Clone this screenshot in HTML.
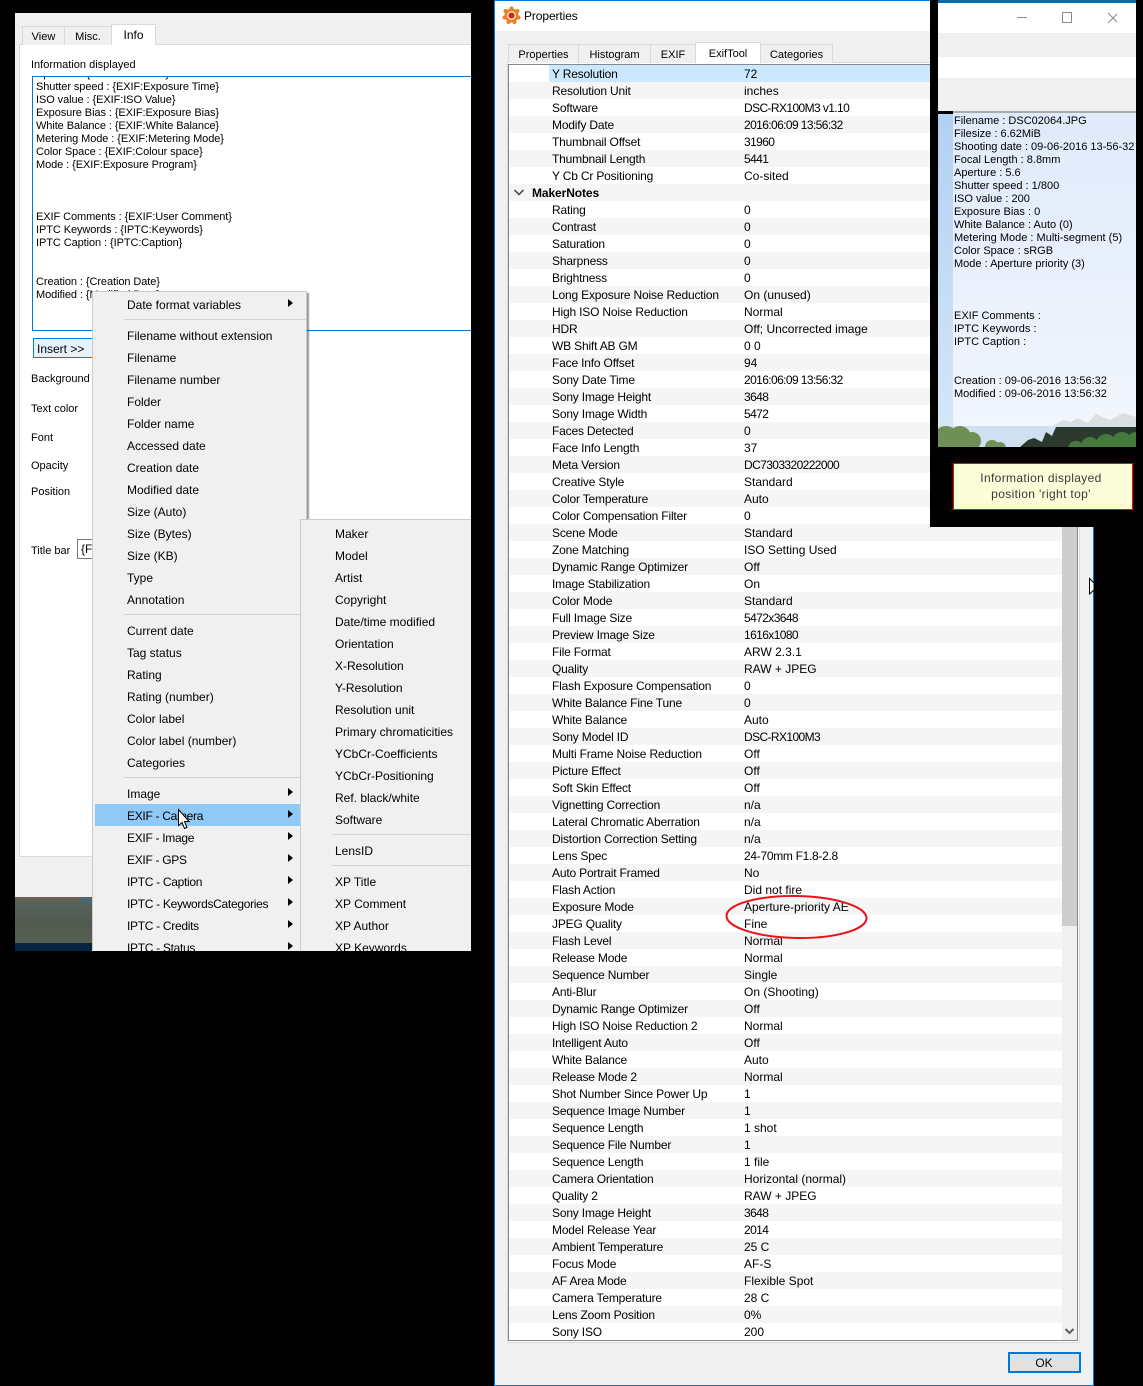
<!DOCTYPE html>
<html><head><meta charset="utf-8"><style>
html,body{margin:0;padding:0;background:#000}
#p{position:relative;width:1143px;height:1386px;overflow:hidden;background:#000;font:12px/16px "Liberation Sans",sans-serif;color:#000}
#p div,#p span{position:absolute;white-space:nowrap}
.w{background:#f0f0f0}
.tb{background:#f0f0f0;border:1px solid #d9d9d9;border-bottom:none;box-sizing:border-box;text-align:center;line-height:20px;font-size:11px}
.ta{background:#fff;border:1px solid #d9d9d9;border-bottom:none;box-sizing:border-box;text-align:center;line-height:23px;z-index:2;font-size:11px}
#m div,#s div{position:relative;height:22px;line-height:25px;padding-left:34px}
#m,#s{background:#f0f0f0;box-sizing:border-box}
#m{left:77px;top:278px;width:215px;height:670px;border:1px solid #ccc;padding-top:1px;box-shadow:2px 2px 1px rgba(0,0,0,.4)}
#s{left:285px;top:506px;width:190px;height:440px;border:1px solid #ccc;padding-top:2px}
#m hr,#s hr{border:0;border-top:1px solid #d4d4d4;margin:4px 0 4px 31px;height:0}
#m div span{left:195px;top:6px;width:0;height:0;border-left:5px solid #000;border-top:4px solid transparent;border-bottom:4px solid transparent}
#m div.h{background:#90c8f6;margin:0 5px 0 2px;padding-left:32px}
#m div.h span{left:193px}
#m div.c{letter-spacing:-.3px}
#L div{position:static;height:17px;line-height:18px;padding-left:43px;display:flex}
#L div:nth-child(even){background:#f5f5f5}
#L b{font-weight:400;width:192px;flex:none;letter-spacing:-.18px}
#L em{font-style:normal}
#L em.n{letter-spacing:-.6px}
#L div.g{padding-left:23px;font-weight:700;letter-spacing:-.1px}
.o{left:16px;top:0;line-height:13px;font-size:11px}
.l{font-size:11px}
</style></head><body><div id="p">

<div class="w" style="left:15px;top:13px;width:456px;height:938px;overflow:hidden">
<div style="left:4px;top:31px;width:470px;height:813px;background:#fff;border:1px solid #d9d9d9;box-sizing:border-box"></div>
<div class="tb" style="left:7px;top:13px;width:43px;height:19px">View</div>
<div class="tb" style="left:49px;top:13px;width:48px;height:19px">Misc.</div>
<div class="ta" style="left:96px;top:11px;width:45px;height:21px;font-size:12px;line-height:21px">Info</div>
<div class="l" style="left:16px;top:44px">Information displayed</div>
<div style="left:17px;top:63px;width:470px;height:255px;border:1px solid #0078d7;box-sizing:border-box;background:#fff;overflow:hidden;line-height:13px;font-size:11px;letter-spacing:-.08px">
<div style="left:3px;top:-9px">Aperture : {EXIF:F Number}</div>
<div style="left:3px;top:4px">Shutter speed : {EXIF:Exposure Time}<br>ISO value : {EXIF:ISO Value}<br>Exposure Bias : {EXIF:Exposure Bias}<br>White Balance : {EXIF:White Balance}<br>Metering Mode : {EXIF:Metering Mode}<br>Color Space : {EXIF:Colour space}<br>Mode : {EXIF:Exposure Program}<br><br><br><br>EXIF Comments : {EXIF:User Comment}<br>IPTC Keywords : {IPTC:Keywords}<br>IPTC Caption : {IPTC:Caption}<br><br><br>Creation : {Creation Date}<br>Modified : {Modified Date}</div>
</div>
<div style="left:18px;top:325px;width:70px;height:20px;border:1px solid #0078d7;box-sizing:border-box;background:#e5f1fb;line-height:21px;padding-left:3px">Insert &gt;&gt;</div>
<div class="l" style="left:16px;top:358px">Background color</div>
<div class="l" style="left:16px;top:388px">Text color</div>
<div class="l" style="left:16px;top:417px">Font</div>
<div class="l" style="left:16px;top:445px">Opacity</div>
<div class="l" style="left:16px;top:471px">Position</div>
<div class="l" style="left:16px;top:530px">Title bar</div>
<div style="left:62px;top:526px;width:40px;height:20px;border:1px solid #7a7a7a;box-sizing:border-box;background:#fff;line-height:19px;padding-left:3px">{Fi</div>
<div style="left:0;top:884px;width:80px;height:1px;background:#0078d7"></div>
<div style="left:0;top:885px;width:80px;height:45px;background:linear-gradient(#5a6560,#4f5a50 50%,#565f50)"></div>
<div style="left:0;top:930px;width:80px;height:8px;background:#04243f"></div>

<div id="m">
<div>Date format variables<span></span></div><hr>
<div>Filename without extension</div><div>Filename</div><div>Filename number</div><div>Folder</div><div>Folder name</div><div>Accessed date</div><div>Creation date</div><div>Modified date</div><div>Size (Auto)</div><div>Size (Bytes)</div><div>Size (KB)</div><div>Type</div><div>Annotation</div><hr>
<div>Current date</div><div>Tag status</div><div>Rating</div><div>Rating (number)</div><div>Color label</div><div>Color label (number)</div><div>Categories</div><hr>
<div>Image<span></span></div><div class="h c">EXIF - Camera<span></span></div><div class="c">EXIF - Image<span></span></div><div class="c">EXIF - GPS<span></span></div><div class="c">IPTC - Caption<span></span></div><div class="c">IPTC - KeywordsCategories<span></span></div><div class="c">IPTC - Credits<span></span></div><div class="c">IPTC - Status<span></span></div>
</div>
<div id="s">
<div>Maker</div><div>Model</div><div>Artist</div><div>Copyright</div><div>Date/time modified</div><div>Orientation</div><div>X-Resolution</div><div>Y-Resolution</div><div>Resolution unit</div><div>Primary chromaticities</div><div>YCbCr-Coefficients</div><div>YCbCr-Positioning</div><div>Ref. black/white</div><div>Software</div><hr>
<div>LensID</div><hr>
<div>XP Title</div><div>XP Comment</div><div>XP Author</div><div>XP Keywords</div>
</div>
<svg style="position:absolute;left:162px;top:795px;z-index:5" width="16" height="24" viewBox="0 0 16 24"><path d="M1.500 1.500V17.500L5 14.500L7.500 20.500L10 19.500L7.500 13.500H12Z" fill="#fff" stroke="#000" stroke-width="1"/></svg>
</div>

<div style="left:494px;top:0;width:600px;height:1386px;background:#f0f0f0;border:1px solid #0078d7;box-sizing:border-box"></div>
<div style="left:495px;top:1px;width:598px;height:30px;background:#fff"></div>
<svg style="position:absolute;left:502px;top:6px" width="19" height="19" viewBox="0 0 19 19"><g fill="#e8802a"><circle cx="9.500" cy="9.500" r="7"/><circle cx="9.500" cy="2.500" r="2"/><circle cx="15.500" cy="5" r="2"/><circle cx="16.500" cy="11.500" r="2"/><circle cx="12.500" cy="16" r="2"/><circle cx="6.500" cy="16" r="2"/><circle cx="2.500" cy="11.500" r="2"/><circle cx="3.500" cy="5" r="2"/></g><circle cx="9.500" cy="9.500" r="4.500" fill="#fde0c0"/><circle cx="9.500" cy="9.500" r="3" fill="#c8281a"/></svg>
<div style="left:524px;top:8px;letter-spacing:-.1px">Properties</div>
<div style="left:507px;top:62px;width:573px;height:1281px;background:#fff;border:1px solid #d9d9d9;box-sizing:border-box"></div>
<div class="tb" style="left:508px;top:44px;width:71px;height:19px">Properties</div>
<div class="tb" style="left:578px;top:44px;width:73px;height:19px">Histogram</div>
<div class="tb" style="left:650px;top:44px;width:46px;height:19px">EXIF</div>
<div class="ta" style="left:695px;top:42px;width:66px;height:21px">ExifTool</div>
<div class="tb" style="left:760px;top:44px;width:73px;height:19px">Categories</div>
<div style="left:508px;top:64px;width:570px;height:1277px;border:1px solid #828790;box-sizing:border-box;background:#fff"></div>
<div style="left:1062px;top:65px;width:15px;height:1275px;background:#f0f0f0"></div>
<div style="left:1062px;top:82px;width:15px;height:844px;background:#cdcdcd"></div>
<svg style="position:absolute;left:1064px;top:1327px" width="11" height="9" viewBox="0 0 11 9"><path d="M1.500 2L5.500 6L9.500 2" fill="none" stroke="#606060" stroke-width="2"/></svg>
<div id="L" style="left:509px;top:65px;width:553px;height:1275px;overflow:hidden;line-height:17px">
<div style="background:linear-gradient(90deg,#fff 40px,#cce8ff 40px)"><b>Y Resolution</b><em>72</em></div>
<div><b>Resolution Unit</b><em>inches</em></div>
<div><b>Software</b><em class="n">DSC-RX100M3 v1.10</em></div>
<div><b>Modify Date</b><em class="n">2016:06:09 13:56:32</em></div>
<div><b>Thumbnail Offset</b><em class="n">31960</em></div>
<div><b>Thumbnail Length</b><em class="n">5441</em></div>
<div><b>Y Cb Cr Positioning</b><em>Co-sited</em></div>
<div class="g">MakerNotes</div>
<div><b>Rating</b><em>0</em></div>
<div><b>Contrast</b><em>0</em></div>
<div><b>Saturation</b><em>0</em></div>
<div><b>Sharpness</b><em>0</em></div>
<div><b>Brightness</b><em>0</em></div>
<div><b>Long Exposure Noise Reduction</b><em>On (unused)</em></div>
<div><b>High ISO Noise Reduction</b><em>Normal</em></div>
<div><b>HDR</b><em>Off; Uncorrected image</em></div>
<div><b>WB Shift AB GM</b><em>0 0</em></div>
<div><b>Face Info Offset</b><em>94</em></div>
<div><b>Sony Date Time</b><em class="n">2016:06:09 13:56:32</em></div>
<div><b>Sony Image Height</b><em class="n">3648</em></div>
<div><b>Sony Image Width</b><em class="n">5472</em></div>
<div><b>Faces Detected</b><em>0</em></div>
<div><b>Face Info Length</b><em>37</em></div>
<div><b>Meta Version</b><em class="n">DC7303320222000</em></div>
<div><b>Creative Style</b><em>Standard</em></div>
<div><b>Color Temperature</b><em>Auto</em></div>
<div><b>Color Compensation Filter</b><em>0</em></div>
<div><b>Scene Mode</b><em>Standard</em></div>
<div><b>Zone Matching</b><em>ISO Setting Used</em></div>
<div><b>Dynamic Range Optimizer</b><em>Off</em></div>
<div><b>Image Stabilization</b><em>On</em></div>
<div><b>Color Mode</b><em>Standard</em></div>
<div><b>Full Image Size</b><em class="n">5472x3648</em></div>
<div><b>Preview Image Size</b><em class="n">1616x1080</em></div>
<div><b>File Format</b><em>ARW 2.3.1</em></div>
<div><b>Quality</b><em>RAW + JPEG</em></div>
<div><b>Flash Exposure Compensation</b><em>0</em></div>
<div><b>White Balance Fine Tune</b><em>0</em></div>
<div><b>White Balance</b><em>Auto</em></div>
<div><b>Sony Model ID</b><em class="n">DSC-RX100M3</em></div>
<div><b>Multi Frame Noise Reduction</b><em>Off</em></div>
<div><b>Picture Effect</b><em>Off</em></div>
<div><b>Soft Skin Effect</b><em>Off</em></div>
<div><b>Vignetting Correction</b><em>n/a</em></div>
<div><b>Lateral Chromatic Aberration</b><em>n/a</em></div>
<div><b>Distortion Correction Setting</b><em>n/a</em></div>
<div><b>Lens Spec</b><em style="letter-spacing:-.3px">24-70mm F1.8-2.8</em></div>
<div><b>Auto Portrait Framed</b><em>No</em></div>
<div><b>Flash Action</b><em>Did not fire</em></div>
<div><b>Exposure Mode</b><em>Aperture-priority AE</em></div>
<div><b>JPEG Quality</b><em>Fine</em></div>
<div><b>Flash Level</b><em>Normal</em></div>
<div><b>Release Mode</b><em>Normal</em></div>
<div><b>Sequence Number</b><em>Single</em></div>
<div><b>Anti-Blur</b><em>On (Shooting)</em></div>
<div><b>Dynamic Range Optimizer</b><em>Off</em></div>
<div><b>High ISO Noise Reduction 2</b><em>Normal</em></div>
<div><b>Intelligent Auto</b><em>Off</em></div>
<div><b>White Balance</b><em>Auto</em></div>
<div><b>Release Mode 2</b><em>Normal</em></div>
<div><b>Shot Number Since Power Up</b><em>1</em></div>
<div><b>Sequence Image Number</b><em>1</em></div>
<div><b>Sequence Length</b><em>1 shot</em></div>
<div><b>Sequence File Number</b><em>1</em></div>
<div><b>Sequence Length</b><em>1 file</em></div>
<div><b>Camera Orientation</b><em>Horizontal (normal)</em></div>
<div><b>Quality 2</b><em>RAW + JPEG</em></div>
<div><b>Sony Image Height</b><em class="n">3648</em></div>
<div><b>Model Release Year</b><em class="n">2014</em></div>
<div><b>Ambient Temperature</b><em>25 C</em></div>
<div><b>Focus Mode</b><em>AF-S</em></div>
<div><b>AF Area Mode</b><em>Flexible Spot</em></div>
<div><b>Camera Temperature</b><em>28 C</em></div>
<div><b>Lens Zoom Position</b><em>0%</em></div>
<div><b>Sony ISO</b><em>200</em></div>
</div>
<svg style="position:absolute;left:513px;top:188px" width="12" height="9" viewBox="0 0 12 9"><path d="M1.500 2L6 6.500L10.500 2" fill="none" stroke="#505050" stroke-width="1.600"/></svg>
<svg style="position:absolute;left:720px;top:890px" width="155" height="55" viewBox="0 0 155 55"><ellipse cx="76.500" cy="27" rx="70" ry="21" transform="rotate(1 76.500 27)" fill="none" stroke="#e8141c" stroke-width="2"/></svg>
<div style="left:1008px;top:1352px;width:73px;height:21px;background:#e1e1e1;border:2px solid #0078d7;box-sizing:border-box;text-align:center;line-height:18px;padding-right:1px">OK</div>
<svg style="position:absolute;left:1088px;top:577px" width="6" height="20" viewBox="0 0 6 20"><path d="M1.500 1.500V17L6 13V6Z" fill="#fff" stroke="#000"/></svg>

<div style="left:930px;top:0;width:213px;height:527px;background:#000"></div>
<div style="left:938px;top:0;width:198px;height:447px;background:#f0f0f0;overflow:hidden">
<div style="left:0;top:0;width:198px;height:3px;background:#0a6ca6"></div>
<div style="left:0;top:3px;width:198px;height:30px;background:#fff"></div>
<div style="left:0;top:57px;width:198px;height:21px;background:#fff"></div>
<div style="left:0;top:111px;width:198px;height:2px;background:#aaa"></div>
<svg style="position:absolute;left:79px;top:11px" width="100" height="13" viewBox="0 0 100 13"><path d="M0 6.500H10M45.500 1.500H54.500V11.500H45.500ZM91 2L101 12M101 2L91 12" fill="none" stroke="#8a8a8a" stroke-width="1"/></svg>
<div style="left:0;top:113px;width:198px;height:334px;background:linear-gradient(#dfeafa,#f3f7fe)"></div>
<div style="left:0;top:113px;width:15px;height:313px;background:linear-gradient(#b2d0f2,#d4e6f8)"></div>
<div style="left:0;top:111px;width:15px;height:3px;background:#000"></div>
<svg style="position:absolute;left:0;top:410px" width="198" height="37" viewBox="0 0 198 37"><path d="M115 16L125 10L133 12L140 8L150 13L158 4L172 10L185 3L198 7V16Z" fill="#dcdfe2"/><rect y="16" width="198" height="21" fill="#cfe0f1"/><g fill="#6f8f58"><circle cx="8" cy="28" r="12"/><circle cx="22" cy="27" r="11"/><circle cx="34" cy="31" r="9"/><circle cx="54" cy="37" r="7"/><circle cx="62" cy="38" r="6"/></g><path d="M82 37L90 30L96 28L104 32L108 22L114 26L118 17H198V37Z" fill="#2c3a2e"/><g fill="#467a3c"><circle cx="138" cy="39" r="8"/><circle cx="152" cy="36" r="9"/><circle cx="168" cy="34" r="10"/><circle cx="184" cy="32" r="10"/><circle cx="198" cy="31" r="9"/></g></svg>
<div class="o" style="top:115px">Filename : DSC02064.JPG<br>Filesize : 6.62MiB<br>Shooting date : 09-06-2016 13-56-32<br>Focal Length : 8.8mm<br>Aperture : 5.6<br>Shutter speed : 1/800<br>ISO value : 200<br>Exposure Bias : 0<br>White Balance : Auto (0)<br>Metering Mode : Multi-segment (5)<br>Color Space : sRGB<br>Mode : Aperture priority (3)<br><br><br><br>EXIF Comments :<br>IPTC Keywords :<br>IPTC Caption :<br><br><br>Creation : 09-06-2016 13:56:32<br>Modified : 09-06-2016 13:56:32</div>
</div>
<div style="left:953px;top:463px;width:180px;height:47px;background:#fbfdd9;border:1px solid #f00;box-sizing:border-box;text-align:center;color:#3a3a3a;line-height:16px;padding:6px 4px 0 0;letter-spacing:.35px">Information displayed<br>position 'right top'</div>
</div></body></html>
